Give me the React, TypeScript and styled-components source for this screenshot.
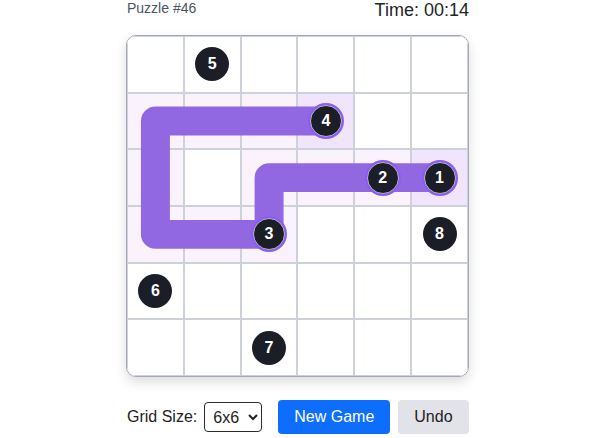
import React from 'react'
import styled, { createGlobalStyle } from 'styled-components'

const GlobalStyle = createGlobalStyle`
  body {
    margin: 0;
    background: #fff;
    font-family: "Liberation Sans", Arial, sans-serif;
  }
`

const SIZE = 6

// cells the path passes through, as "row-col"
const visited = new Set([
  '1-0', '1-1', '1-2', '1-3',
  '2-0', '2-2', '2-3', '2-4', '2-5',
  '3-0', '3-1', '3-2',
])
const ends = new Set(['1-3', '2-5'])

const dots: Record<string, number> = {
  '0-1': 5,
  '1-3': 4,
  '2-4': 2,
  '2-5': 1,
  '3-2': 3,
  '3-5': 8,
  '4-0': 6,
  '5-2': 7,
}

const pathPoints = [
  [5.5, 2.5],
  [2.5, 2.5],
  [2.5, 3.5],
  [0.5, 3.5],
  [0.5, 1.5],
  [3.5, 1.5],
]

const App = () => {
  const cells = []
  for (let r = 0; r < SIZE; r++) {
    for (let c = 0; c < SIZE; c++) {
      const key = `${r}-${c}`
      const tone = ends.has(key) ? 'end' : visited.has(key) ? 'visited' : 'empty'
      const n = dots[key]
      cells.push(
        <Cell key={key} $tone={tone}>
          {n && <Dot $onPath={visited.has(key)}>{n}</Dot>}
        </Cell>
      )
    }
  }

  return (
    <Page>
      <GlobalStyle />
      <Column>
        <Header>
          <PuzzleLabel>Puzzle #46</PuzzleLabel>
          <Timer>Time: 00:14</Timer>
        </Header>

        <Board>
          <Grid>{cells}</Grid>
          <PathLayer viewBox="0 0 6 6" preserveAspectRatio="none">
            <polyline
              points={pathPoints.map(p => p.join(',')).join(' ')}
              fill="none"
              stroke="#9268e2"
              strokeWidth={0.51}
              strokeLinejoin="round"
              strokeLinecap="round"
            />
          </PathLayer>
        </Board>

        <Controls>
          <Label>Grid Size:</Label>
          <SizeSelect defaultValue="6">
            <option value="4">4x4</option>
            <option value="5">5x5</option>
            <option value="6">6x6</option>
            <option value="7">7x7</option>
          </SizeSelect>
          <Button $variant="primary">New Game</Button>
          <Button $variant="secondary">Undo</Button>
        </Controls>
      </Column>
    </Page>
  )
}

const Page = styled.div`
  display: flex;
  justify-content: center;
  padding-right: 3px;
`

const Column = styled.div`
  width: 343px;
  display: flex;
  flex-direction: column;
`

const Header = styled.div`
  display: flex;
  justify-content: space-between;
  align-items: flex-start;
  height: 20px;
  margin-bottom: 15px;
`

const PuzzleLabel = styled.span`
  font-size: 14px;
  line-height: 17px;
  color: #4b5563;
  padding-left: 1px;
`

const Timer = styled.span`
  font-size: 18px;
  line-height: 20px;
  color: #1f2328;
`

const Board = styled.div`
  position: relative;
  width: 343px;
  height: 342px;
  box-sizing: border-box;
  border: 1px solid #a3a9b6;
  border-radius: 10px;
  overflow: hidden;
  box-shadow: 0 5px 12px rgba(0, 0, 0, 0.14);
  background: #fff;
`

const Grid = styled.div`
  display: grid;
  grid-template-columns: repeat(6, 1fr);
  grid-template-rows: repeat(6, 1fr);
  width: 100%;
  height: 100%;
`

const Cell = styled.div<{ $tone: 'empty' | 'visited' | 'end' }>`
  border: 1px solid #cdd1da;
  display: flex;
  align-items: center;
  justify-content: center;
  background: ${p =>
    p.$tone === 'end' ? '#f1e5fd' : p.$tone === 'visited' ? '#faf3fe' : '#fff'};
`

const PathLayer = styled.svg`
  position: absolute;
  inset: 0;
  width: 100%;
  height: 100%;
  z-index: 1;
  pointer-events: none;
`

const Dot = styled.div<{ $onPath: boolean }>`
  position: relative;
  z-index: 2;
  box-sizing: border-box;
  width: ${p => (p.$onPath ? '32px' : '34px')};
  height: ${p => (p.$onPath ? '32px' : '34px')};
  border-radius: 50%;
  background: #1b1e27;
  color: #fff;
  font-family: "Liberation Sans", Arial, sans-serif;
  font-weight: 700;
  font-size: 16px;
  display: flex;
  align-items: center;
  justify-content: center;
  border: ${p => (p.$onPath ? '1px solid #b9b4c6' : 'none')};
  box-shadow: ${p => (p.$onPath ? '0 0 0 2px #8b5cf6' : 'none')};
`

const Controls = styled.div`
  display: flex;
  align-items: center;
  margin-top: 23px;
  padding-left: 1px;
  white-space: nowrap;
  & > * {
    flex-shrink: 0;
  }
`

const Label = styled.span`
  font-size: 16px;
  color: #222;
  margin-right: 7px;
`

const SizeSelect = styled.select`
  width: 58px;
  height: 30px;
  font-family: "Liberation Sans", Arial, sans-serif;
  font-size: 16px;
  color: #222;
  border: 1px solid #2b2b2b;
  border-radius: 4px;
  background: #fff;
  padding: 0 2px 0 4px;
  margin-right: 16px;
`

const Button = styled.button<{ $variant: 'primary' | 'secondary' }>`
  height: 34px;
  padding: 0 16px;
  border: none;
  border-radius: 4px;
  font-family: "Liberation Sans", Arial, sans-serif;
  font-size: 16px;
  cursor: pointer;
  background: ${p => (p.$variant === 'primary' ? '#0d6efd' : '#e2e3e8')};
  color: ${p => (p.$variant === 'primary' ? '#fff' : '#222')};
  & + & {
    margin-left: 8px;
  }
`

export default App
